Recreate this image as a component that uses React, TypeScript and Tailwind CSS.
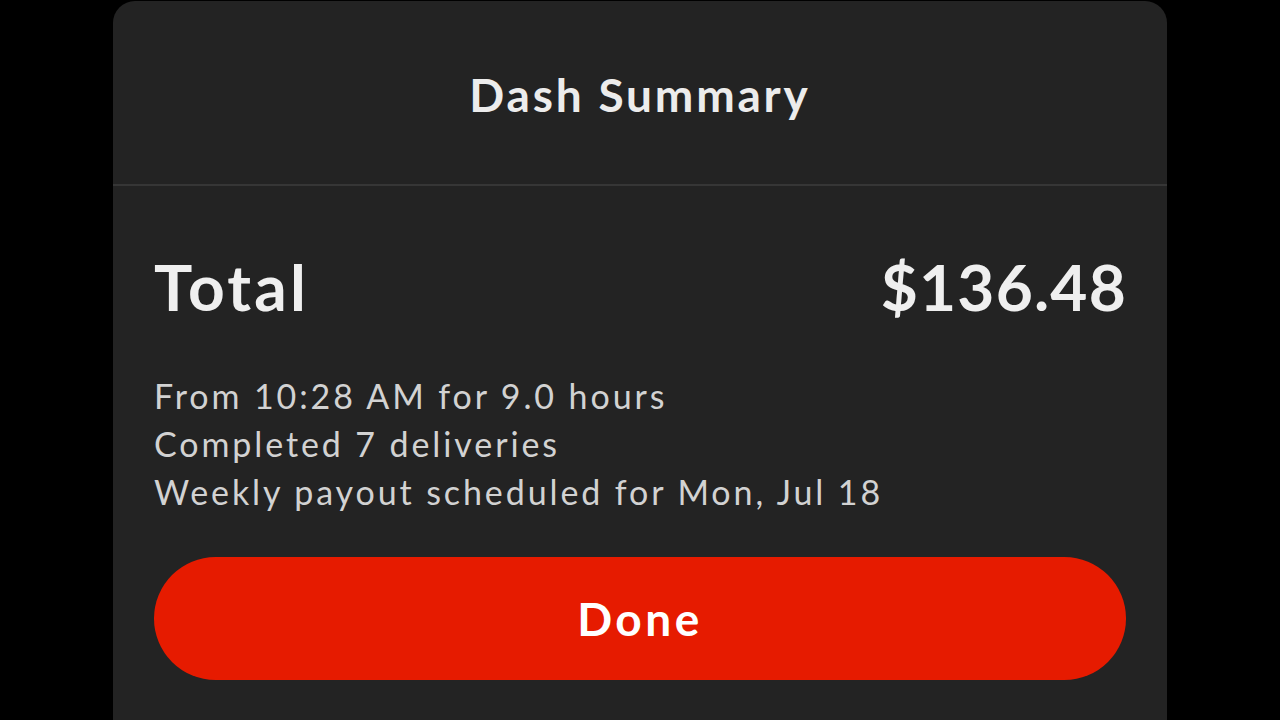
export default function App() {
  const details = [
    "From 10:28 AM for 9.0 hours",
    "Completed 7 deliveries",
    "Weekly payout scheduled for Mon, Jul 18",
  ];

  return (
    <div className="w-[1280px] h-[720px] bg-black overflow-hidden font-['Lato','Open_Sans',sans-serif]">
      <div className="mx-auto mt-px w-[1054px] h-[760px] bg-[#232323] rounded-t-[22px]">
        <div className="h-[185px] flex items-center justify-center border-b-2 border-[#363636] pt-[4px]">
          <h1 className="text-[46px] font-bold text-[#ececec] tracking-[2.8px]">Dash Summary</h1>
        </div>

        <div className="px-[41px]">
          <div className="flex items-center justify-between h-[202px]">
            <span className="text-[64px] font-bold text-[#efefef] tracking-[3.2px]">Total</span>
            <span className="text-[64px] font-bold text-[#efefef] tracking-[1.2px] mr-[-1px]">$136.48</span>
          </div>

          <div className="flex flex-col mt-[-16px]">
            {details.map((line) => (
              <p key={line} className="text-[34px] leading-[48px] text-[#d2d2d2] tracking-[2.9px]">
                {line}
              </p>
            ))}
          </div>

          <button className="mt-[41px] w-full h-[123px] rounded-full bg-[#e61b00] text-white text-[46px] font-bold tracking-[3.5px]">
            Done
          </button>
        </div>
      </div>
    </div>
  );
}
